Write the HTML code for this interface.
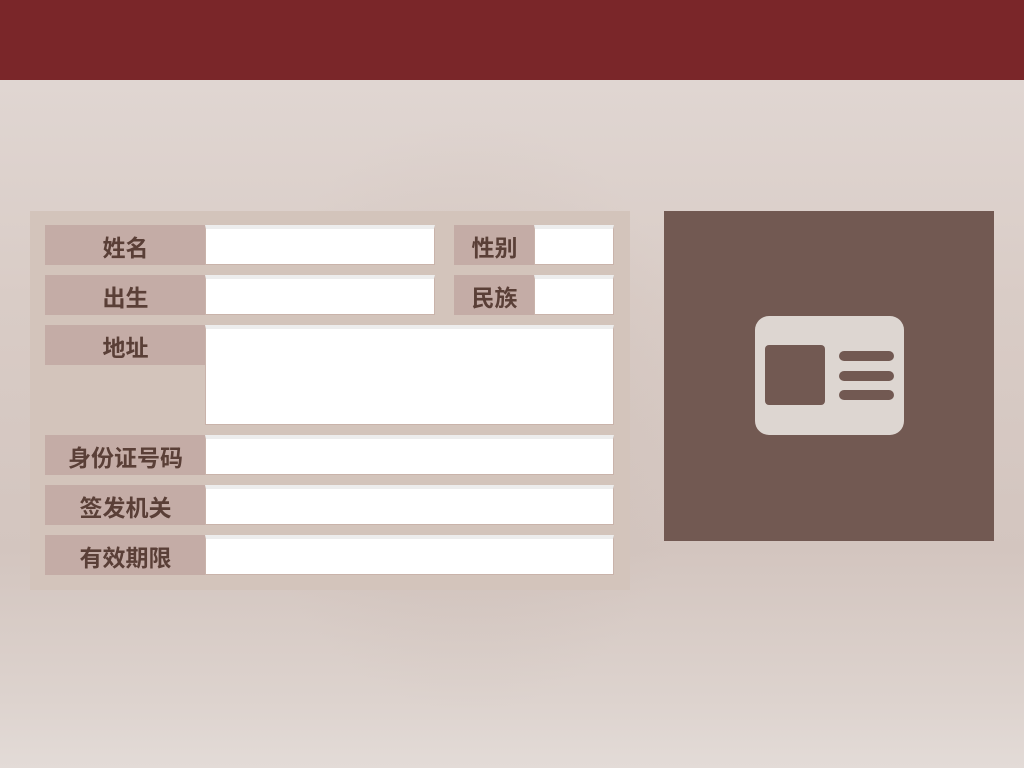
<!DOCTYPE html>
<html><head><meta charset="utf-8"><style>
*{margin:0;padding:0;box-sizing:border-box}
body{width:1024px;height:768px;overflow:hidden;position:relative;font-family:"Liberation Sans","Noto Sans CJK SC",sans-serif;
background:linear-gradient(180deg,#e0d6d2 80px,#d9ccc6 300px,#d3c5bf 550px,#ddd3ce 700px,#e3dbd7 768px);}
.hdr{position:absolute;left:0;top:0;width:1024px;height:80px;background:#7a2629}
.bld{position:absolute;left:240px;top:115px;width:460px;height:600px;background:radial-gradient(ellipse at 50% 50%,rgba(195,178,170,.35),rgba(195,178,170,0) 70%)}
.panel{position:absolute;left:30px;top:211px;width:600px;height:379px;background:#d3c4bb}
.lab{position:absolute;height:40px;background:#c4aca6;color:#5a3f37;font-weight:bold;font-size:23px;line-height:46px;text-align:center}
.inp{position:absolute;background:#fff;border:1px solid #c9b3aa;border-top:4px solid #ededed}
.photo{position:absolute;left:664px;top:211px;width:330px;height:330px;background:#725952}
</style></head><body>
<div class="hdr"></div>
<div class="bld"></div>
<div class="panel">
 <div class="lab" style="left:15px;top:14px;width:161px">姓名</div>
 <div class="inp" style="left:175px;top:14px;width:230px;height:40px"></div>
 <div class="lab" style="left:424px;top:14px;width:81px">性别</div>
 <div class="inp" style="left:504px;top:14px;width:80px;height:40px"></div>
 <div class="lab" style="left:15px;top:64px;width:161px">出生</div>
 <div class="inp" style="left:175px;top:64px;width:230px;height:40px"></div>
 <div class="lab" style="left:424px;top:64px;width:81px">民族</div>
 <div class="inp" style="left:504px;top:64px;width:80px;height:40px"></div>
 <div class="lab" style="left:15px;top:114px;width:161px">地址</div>
 <div class="inp" style="left:175px;top:114px;width:409px;height:100px"></div>
 <div class="lab" style="left:15px;top:224px;width:161px">身份证号码</div>
 <div class="inp" style="left:175px;top:224px;width:409px;height:40px"></div>
 <div class="lab" style="left:15px;top:274px;width:161px">签发机关</div>
 <div class="inp" style="left:175px;top:274px;width:409px;height:40px"></div>
 <div class="lab" style="left:15px;top:324px;width:161px">有效期限</div>
 <div class="inp" style="left:175px;top:324px;width:409px;height:40px"></div>
</div>
<div class="photo">
<svg width="330" height="330" style="position:absolute;left:0;top:0">
<rect x="91" y="105" width="149" height="119" rx="14" fill="#ddd6d1"/>
<rect x="101" y="134" width="60" height="60" rx="4" fill="#725952"/>
<rect x="175" y="140" width="55" height="10" rx="5" fill="#725952"/>
<rect x="175" y="160" width="55" height="10" rx="5" fill="#725952"/>
<rect x="175" y="179" width="55" height="10" rx="5" fill="#725952"/>
</svg>
</div>
</body></html>
